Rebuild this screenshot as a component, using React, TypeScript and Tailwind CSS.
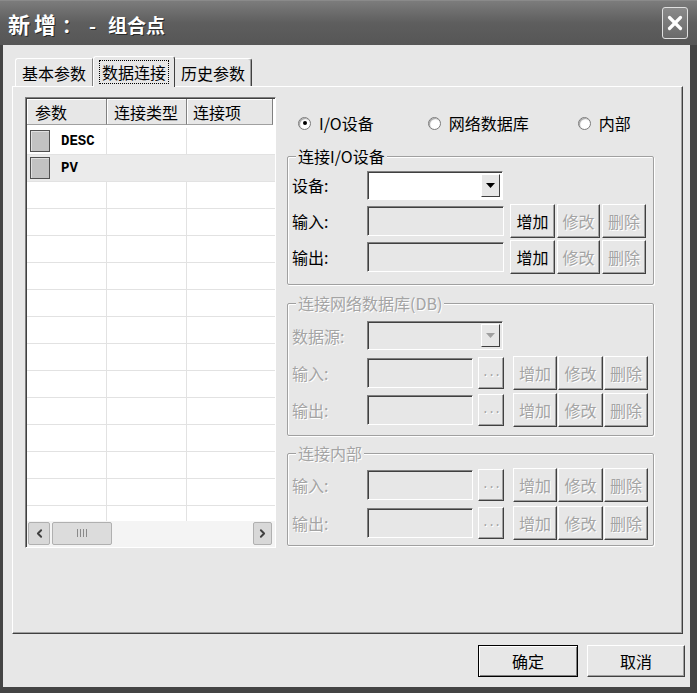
import { ChevronLeft, ChevronRight, X } from "lucide-react";

const dim = "text-[#a4a4a4] [text-shadow:1px_1px_0_#ffffff]";

function Btn({ label, disabled, w }: { label: string; disabled?: boolean; w: string }) {
    return (
        <div className={`${w} h-[34px] flex items-center justify-center bg-[#e7e7e7] border border-t-white border-l-white border-r-[#404040] border-b-[#404040] shadow-[inset_-1px_-1px_0_#a0a0a0] text-[16px] leading-none ${disabled ? dim : "text-black"}`}>
            {label}
        </div>
    )
}

function Field({ w, white }: { w: string; white?: boolean }) {
    return (
        <div className={`${w} h-[30px] border border-t-[#808080] border-l-[#808080] border-r-white border-b-white shadow-[inset_1px_1px_0_#404040] ${white ? "bg-white" : "bg-[#e7e7e7]"}`} />
    )
}

function Combo({ disabled }: { disabled?: boolean }) {
    return (
        <div className={`w-[136px] h-[29px] flex justify-end p-[2px] border border-t-[#808080] border-l-[#808080] border-r-white border-b-white shadow-[inset_1px_1px_0_#404040] ${disabled ? "bg-[#e7e7e7]" : "bg-white"}`}>
            <div className="w-[19px] h-full flex items-center justify-center bg-[#e7e7e7] border border-t-white border-l-white border-r-[#404040] border-b-[#404040]">
                <svg width="9" height="5" viewBox="0 0 9 5">
                    <path d="M0 0H9L4.5 5Z" fill={disabled ? "#a0a0a0" : "#000"} />
                </svg>
            </div>
        </div>
    )
}

function Dots() {
    return (
        <div className="w-[26px] h-[32px] flex items-center justify-center bg-[#e7e7e7] border border-t-white border-l-white border-r-[#404040] border-b-[#404040] shadow-[inset_-1px_-1px_0_#a0a0a0] text-[12px] text-[#a4a4a4] [text-shadow:1px_1px_0_#ffffff] font-['Liberation_Mono',monospace] tracking-[-1px]">
            ...
        </div>
    )
}

function Label({ text, disabled }: { text: string; disabled?: boolean }) {
    return <span className={`w-[79px] pl-[4px] text-[16px] leading-none ${disabled ? dim : "text-black"}`}>{text}</span>
}

function Group({ title, disabled, children }: { title: string; disabled?: boolean; children: React.ReactNode }) {
    return (
        <fieldset className="w-[367px] border border-[#a0a0a0] shadow-[1px_1px_0_#ffffff,inset_1px_1px_0_#ffffff] rounded-[2px]">
            <legend className={`ml-[8px] px-[2px] bg-[#e7e7e7] text-[16px] leading-[18px] ${disabled ? dim : "text-black"}`}>{title}</legend>
            {children}
        </fieldset>
    )
}

function Radio({ label, checked, className }: { label: string; checked?: boolean; className: string }) {
    return (
        <div className={`flex items-center gap-[8px] ${className}`}>
            <div className="w-[13px] h-[13px] rounded-full bg-white border border-[#7a7a7a] shadow-[inset_1px_1px_1px_#a0a0a0] flex items-center justify-center">
                {checked && <div className="w-[4px] h-[4px] rounded-full bg-black" />}
            </div>
            <span className="text-[16px] leading-none text-black">{label}</span>
        </div>
    )
}

const rows = [
    { name: "DESC", sel: false },
    { name: "PV", sel: true },
    ...Array.from({ length: 13 }, () => ({ name: "", sel: false })),
];

function ParamList() {
    return (
        <div className="w-[251px] h-[451px] flex flex-col bg-white border border-t-[#808080] border-l-[#808080] border-r-white border-b-white shadow-[inset_1px_1px_0_#404040] pl-[1px] pt-[1px]">
            <div className="flex h-[26px] shrink-0 bg-[#e7e7e7] text-[16px] leading-none text-black">
                <div className="w-[80px] flex items-center pl-[8px] border-r border-r-[#808080] border-b border-b-[#a0a0a0] shadow-[inset_1px_1px_0_#ffffff]">参数</div>
                <div className="w-[80px] flex items-center pl-[7px] border-r border-r-[#808080] border-b border-b-[#a0a0a0] shadow-[inset_1px_1px_0_#ffffff]">连接类型</div>
                <div className="w-[86px] flex items-center pl-[6px] border-r border-r-[#808080] border-b border-b-[#a0a0a0] shadow-[inset_1px_1px_0_#ffffff]">连接项</div>
                <div className="flex-1 bg-white" />
            </div>
            <div className="flex-1 flex flex-col overflow-hidden pt-[3px]">
                {rows.map((r, i) => (
                    <div key={i} className={`flex h-[27px] shrink-0 border-b border-b-[#e2e2e2] ${r.sel ? "bg-[#ebebeb]" : ""}`}>
                        <div className={`w-[80px] flex items-center pl-[3px] gap-[11px] ${r.sel ? "" : "border-r border-r-[#e2e2e2]"}`}>
                            {r.name && <div className="w-[20px] h-[22px] bg-[#c2c2c2] border border-[#505050] shadow-[inset_1px_1px_0_#e0e0e0]" />}
                            <span className="font-['Liberation_Mono',monospace] font-semibold text-[14px] text-black">{r.name}</span>
                        </div>
                        <div className={`w-[80px] ${r.sel ? "" : "border-r border-r-[#e2e2e2]"}`} />
                        <div className="flex-1" />
                    </div>
                ))}
            </div>
            <div className="h-[26px] shrink-0 flex items-center bg-[#f4f4f4] pl-[1px] pr-[3px] pb-[2px]">
                <div className="w-[22px] h-[23px] flex items-center justify-center bg-[#d8d8d8] border border-[#b0b0b0] rounded-[2px]">
                    <ChevronLeft size={13} strokeWidth={3.5} color="#404040" />
                </div>
                <div className="w-[60px] h-[23px] ml-[2px] flex items-center justify-center gap-[2px] bg-[#dcdcdc] border border-[#b0b0b0] rounded-[2px]">
                    <div className="w-[1px] h-[8px] bg-[#8a8a8a]" />
                    <div className="w-[1px] h-[8px] bg-[#8a8a8a]" />
                    <div className="w-[1px] h-[8px] bg-[#8a8a8a]" />
                    <div className="w-[1px] h-[8px] bg-[#8a8a8a]" />
                </div>
                <div className="flex-1" />
                <div className="w-[19px] h-[23px] flex items-center justify-center bg-[#d8d8d8] border border-[#b0b0b0] rounded-[2px]">
                    <ChevronRight size={13} strokeWidth={3.5} color="#404040" />
                </div>
            </div>
        </div>
    )
}

export default function App() {
    return (
        <div className="w-[697px] h-[693px] flex flex-col bg-[#444444] overflow-hidden font-['Noto_Sans_CJK_SC',sans-serif]">
            {/* title bar */}
            <div className="h-[45px] shrink-0 flex items-center justify-between pl-[8px] pr-[9px] bg-gradient-to-b from-[#7c7c7c] via-[#5e5e5e] to-[#565656] border-t border-t-[#8a8a8a]">
                <div className="flex items-baseline text-white font-bold [text-shadow:1px_1px_0_#2a2a2a]">
                    <span className="text-[22px] tracking-[4px]">新增</span>
                    <span className="text-[19px] ml-[2px]">：</span>
                    <span className="text-[19px] ml-[8px]">-</span>
                    <span className="text-[19px] ml-[12px]">组合点</span>
                </div>
                <div className="w-[26px] h-[32px] flex items-center justify-center rounded-[3px] border border-[#e0e0e0] bg-gradient-to-b from-[#8a8a8a] to-[#6a6a6a]">
                    <X size={22} strokeWidth={3.5} color="#ffffff" />
                </div>
            </div>

            {/* body */}
            <div className="flex-1 flex flex-col ml-[3px] mr-[7px] mb-[6px] bg-[#e7e7e7] pl-[9px] pr-[7px] pt-[10px] pb-[10px]">
                {/* tabs */}
                <div className="h-[31px] shrink-0 flex items-end pl-[3px] text-[16px] leading-none text-black">
                    <div className="w-[78px] h-[28px] flex items-center justify-center border-t border-l border-t-white border-l-white border-r border-r-[#808080] rounded-tl-[3px]">基本参数</div>
                    <div className="w-[82px] h-[31px] -mb-[1px] relative flex items-center justify-center bg-[#e7e7e7] border-t border-l border-t-white border-l-white border-r border-r-[#404040] rounded-t-[3px]">
                        <span className="px-[2px] py-[3px] border border-dotted border-black">数据连接</span>
                    </div>
                    <div className="w-[77px] h-[28px] flex items-center justify-center border-t border-t-white border-r border-r-[#404040] shadow-[inset_-1px_0_0_#a0a0a0] rounded-tr-[3px]">历史参数</div>
                </div>

                {/* panel */}
                <div className="h-[548px] shrink-0 flex items-start border border-t-white border-l-white border-r-[#404040] border-b-[#404040] shadow-[inset_-1px_-1px_0_#a0a0a0] pl-[12px] pt-[10px]">
                    <ParamList />

                    <div className="ml-[11px] flex flex-col">
                        <div className="h-[20px] mt-[16px] flex items-center">
                            <Radio label="I/O设备" checked className="ml-[11px]" />
                            <Radio label="网络数据库" className="ml-[54px]" />
                            <Radio label="内部" className="ml-[49px]" />
                        </div>

                        <div className="mt-[14px]">
                            <Group title="连接I/O设备">
                                <div className="flex items-center h-[36px] mt-[2px]">
                                    <Label text="设备:" />
                                    <Combo />
                                </div>
                                <div className="flex items-center h-[36px]">
                                    <Label text="输入:" />
                                    <Field w="w-[137px]" />
                                    <div className="ml-[6px] flex gap-[2px]">
                                        <Btn label="增加" w="w-[45px]" />
                                        <Btn label="修改" w="w-[43px]" disabled />
                                        <Btn label="删除" w="w-[44px]" disabled />
                                    </div>
                                </div>
                                <div className="flex items-center h-[36px] mb-[9px]">
                                    <Label text="输出:" />
                                    <Field w="w-[137px]" />
                                    <div className="ml-[6px] flex gap-[2px]">
                                        <Btn label="增加" w="w-[45px]" />
                                        <Btn label="修改" w="w-[43px]" disabled />
                                        <Btn label="删除" w="w-[44px]" disabled />
                                    </div>
                                </div>
                            </Group>
                        </div>

                        <div className="mt-[9px]">
                            <Group title="连接网络数据库(DB)" disabled>
                                <div className="flex items-center h-[37px] mt-[5px]">
                                    <Label text="数据源:" disabled />
                                    <Combo disabled />
                                </div>
                                <div className="flex items-center h-[37px]">
                                    <Label text="输入:" disabled />
                                    <Field w="w-[106px]" />
                                    <div className="ml-[5px]"><Dots /></div>
                                    <div className="ml-[9px] flex gap-[1px]">
                                        <Btn label="增加" w="w-[44px]" disabled />
                                        <Btn label="修改" w="w-[45px]" disabled />
                                        <Btn label="删除" w="w-[44px]" disabled />
                                    </div>
                                </div>
                                <div className="flex items-center h-[37px] mb-[7px]">
                                    <Label text="输出:" disabled />
                                    <Field w="w-[106px]" />
                                    <div className="ml-[5px]"><Dots /></div>
                                    <div className="ml-[9px] flex gap-[1px]">
                                        <Btn label="增加" w="w-[44px]" disabled />
                                        <Btn label="修改" w="w-[45px]" disabled />
                                        <Btn label="删除" w="w-[44px]" disabled />
                                    </div>
                                </div>
                            </Group>
                        </div>

                        <div className="mt-[8px]">
                            <Group title="连接内部" disabled>
                                <div className="flex items-center h-[38px] mt-[4px]">
                                    <Label text="输入:" disabled />
                                    <Field w="w-[106px]" />
                                    <div className="ml-[5px]"><Dots /></div>
                                    <div className="ml-[9px] flex gap-[1px]">
                                        <Btn label="增加" w="w-[44px]" disabled />
                                        <Btn label="修改" w="w-[45px]" disabled />
                                        <Btn label="删除" w="w-[44px]" disabled />
                                    </div>
                                </div>
                                <div className="flex items-center h-[38px] mb-[3px]">
                                    <Label text="输出:" disabled />
                                    <Field w="w-[106px]" />
                                    <div className="ml-[5px]"><Dots /></div>
                                    <div className="ml-[9px] flex gap-[1px]">
                                        <Btn label="增加" w="w-[44px]" disabled />
                                        <Btn label="修改" w="w-[45px]" disabled />
                                        <Btn label="删除" w="w-[44px]" disabled />
                                    </div>
                                </div>
                            </Group>
                        </div>
                    </div>
                </div>

                {/* footer buttons */}
                <div className="mt-[11px] h-[32px] flex justify-end gap-[9px] -mr-[2px] text-[16px] leading-none text-black">
                    <div className="w-[100px] h-[32px] flex items-center justify-center bg-[#e7e7e7] border border-black shadow-[inset_1px_1px_0_#ffffff,inset_-1px_-1px_0_#808080]">确定</div>
                    <div className="w-[98px] h-[32px] flex items-center justify-center bg-[#e7e7e7] border border-t-white border-l-white border-r-[#404040] border-b-[#404040] shadow-[inset_-1px_-1px_0_#a0a0a0]">取消</div>
                </div>
            </div>
        </div>
    )
}
